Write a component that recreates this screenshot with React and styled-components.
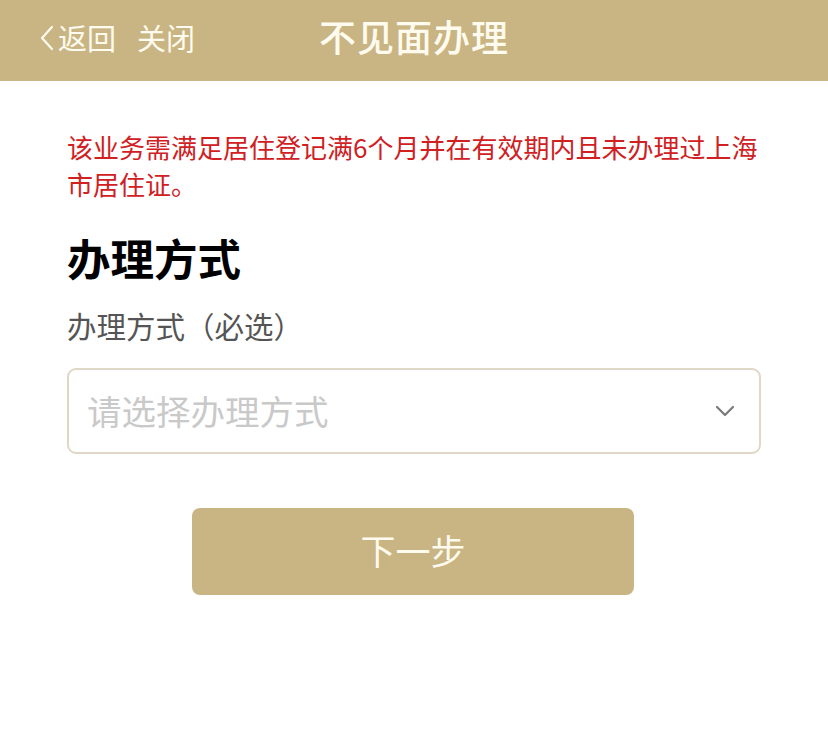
import React from "react";
import styled, { createGlobalStyle } from "styled-components";

const Global = createGlobalStyle`
  html, body { margin: 0; padding: 0; background: #fff; }
  body { font-family: "Noto Sans CJK SC", "Noto Sans", sans-serif; }
`;

const Page = styled.div`
  width: 828px;
  min-height: 743px;
  background: #fff;
`;

const Header = styled.header`
  height: 81px;
  background: #c9b483;
  display: grid;
  grid-template-columns: 1fr auto 1fr;
  align-items: center;
  padding: 0 40px;
  color: #fffbee;
`;

const NavLeft = styled.div`
  display: flex;
  align-items: center;
  gap: 21px;
  font-size: 29px;
  line-height: 1;
  padding-bottom: 6px;
`;

const NavItem = styled.span`
  display: flex;
  align-items: center;
  gap: 4px;
`;

const Title = styled.h1`
  margin: 0;
  font-size: 37px;
  font-weight: 500;
  letter-spacing: 1px;
  padding-bottom: 10px;
`;

const Wrap = styled.div`
  padding: 47px 67px 0 67px;
  display: flex;
  flex-direction: column;
`;

const Notice = styled.p`
  margin: 0 -10px 0 0;
  color: #d0201f;
  font-size: 26px;
  line-height: 37px;
`;

const Heading = styled.h2`
  margin: 28px 0 0 0;
  font-size: 43.5px;
  font-weight: 700;
  color: #000;
  line-height: 56px;
`;

const Label = styled.div`
  margin-top: 19px;
  font-size: 29.5px;
  color: #555;
  line-height: 40px;
`;

const Select = styled.div`
  margin-top: 23px;
  width: 694px;
  height: 86px;
  box-sizing: border-box;
  border: 2px solid #e0d8c6;
  border-radius: 9px;
  display: flex;
  align-items: center;
  justify-content: space-between;
  padding: 0 24px 0 18px;
`;

const Placeholder = styled.span`
  font-size: 34.5px;
  color: #c9c9c9;
  padding-bottom: 2px;
`;

const ButtonRow = styled.div`
  display: flex;
  justify-content: center;
  margin-top: 54px;
  padding-right: 2px;
`;

const Button = styled.button`
  width: 442px;
  height: 87px;
  border: none;
  border-radius: 8px;
  background: #c9b483;
  color: #fffbee;
  font-family: inherit;
  font-size: 35px;
  padding: 0 0 4px 0;
`;

export default function App() {
  return (
    <Page>
      <Global />
      <Header>
        <NavLeft>
          <NavItem>
            <svg width="14" height="26" viewBox="0 0 14 26" fill="none">
              <path d="M12 2 L2 13 L12 24" stroke="#fffbee" strokeWidth="2.2" strokeLinecap="round" strokeLinejoin="round" />
            </svg>
            返回
          </NavItem>
          <NavItem>关闭</NavItem>
        </NavLeft>
        <Title>不见面办理</Title>
        <div />
      </Header>
      <Wrap>
        <Notice>该业务需满足居住登记满6个月并在有效期内且未办理过上海市居住证。</Notice>
        <Heading>办理方式</Heading>
        <Label>办理方式（必选）</Label>
        <Select>
          <Placeholder>请选择办理方式</Placeholder>
          <svg width="20" height="12" viewBox="0 0 20 12" fill="none">
            <path d="M2 2 L10 10 L18 2" stroke="#7a7a7a" strokeWidth="2.2" strokeLinecap="round" strokeLinejoin="round" />
          </svg>
        </Select>
        <ButtonRow>
          <Button>下一步</Button>
        </ButtonRow>
      </Wrap>
    </Page>
  );
}
